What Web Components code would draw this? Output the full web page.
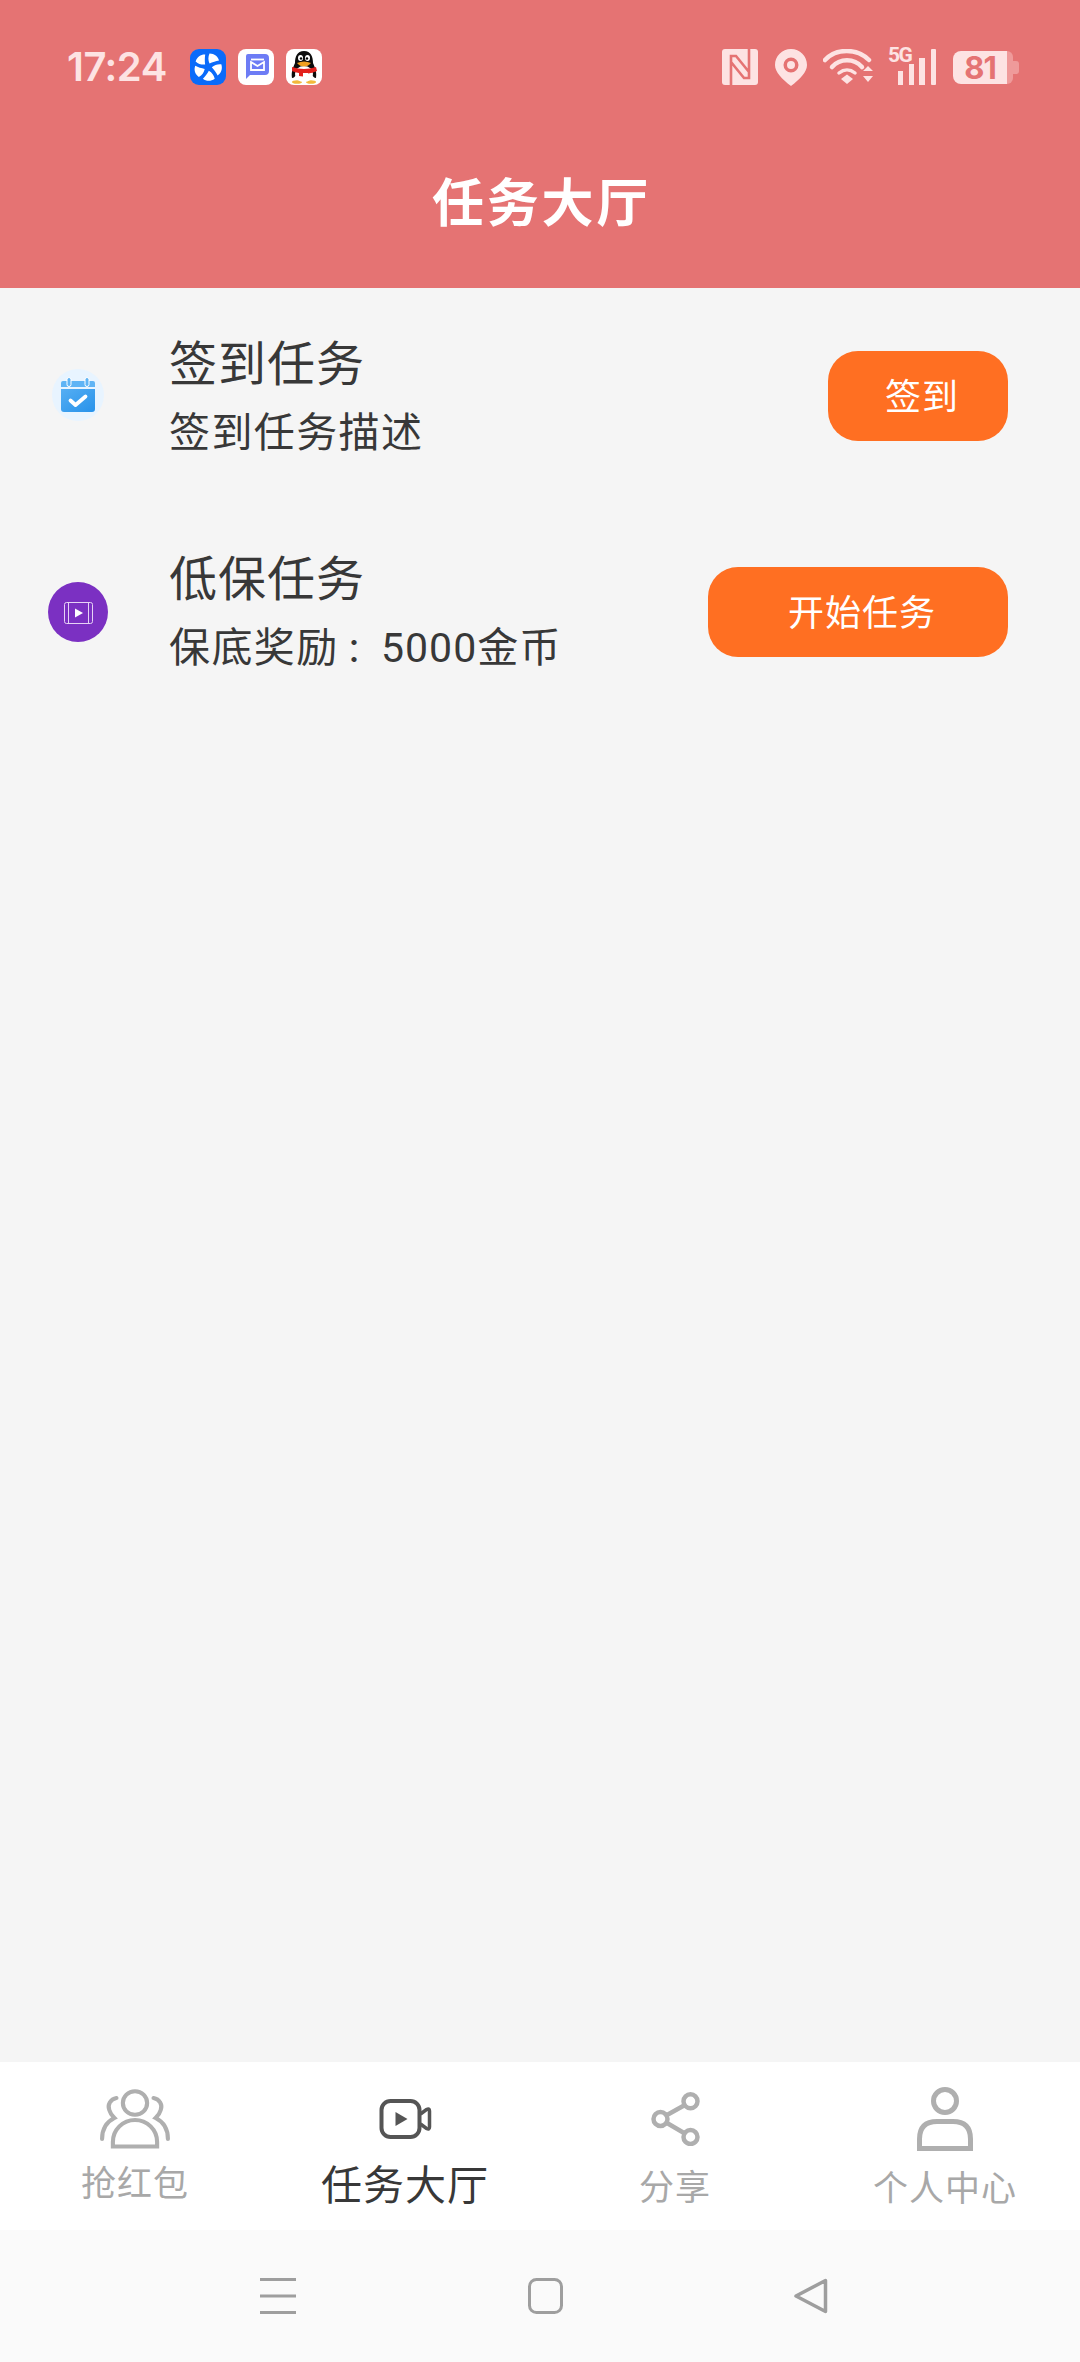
<!DOCTYPE html>
<html><head><meta charset="utf-8">
<style>
html,body{margin:0;padding:0;height:100%}
body{font-family:Roboto,"Noto Sans CJK SC",sans-serif;color:#333;background:#f5f5f5}
</style></head><body>
<app-shell>
  <status-header title-text="任务大厅" time="17:24" battery="81"></status-header>
  <task-list>
    <task-row heading="签到任务" desc="签到任务描述" action="签到" icon="calendar" btn="180"></task-row>
    <task-row heading="低保任务" desc="保底奖励&lt;span class=c&gt;：&lt;/span&gt;&lt;span class=n&gt;5000&lt;/span&gt;金币" action="开始任务" icon="video" btn="300"></task-row>
  </task-list>
  <tab-bar>
    <tab-item label="抢红包" style="--pt:27px;--gap:18px;--fs:35px;--c:#a8a8a8">
      <svg width="72" height="60" viewBox="0 0 70 60" preserveAspectRatio="none" fill="none" stroke="#afafaf" stroke-width="4" stroke-linecap="round">
        <circle cx="35" cy="14" r="11.800"/>
        <path d="M13.500 57.500V53A21.500 22 0 0 1 56.500 53V57.500Z" stroke-linecap="butt"/>
        <path d="M17 9C11 10 8 16 10 21C11 25 13 27 15 29C7 33 3 40 3 50"/>
        <path d="M53 9C59 10 62 16 60 21C59 25 57 27 55 29C63 33 67 40 67 50"/>
      </svg></tab-item>
    <tab-item label="任务大厅" style="--pt:37px;--gap:27px;--fs:41px;--c:#383838">
      <svg width="53" height="40" viewBox="0 0 52 40" fill="none" stroke="#555" stroke-width="4">
        <rect x="2" y="2" width="38" height="36" rx="9"/>
        <path d="M41 15L47 10.500Q50 9 50 12V28Q50 31 47 29.500L41 25" stroke-width="3.500"/>
        <path d="M16 13L28 20L16 27Z" fill="#555" stroke="none"/>
      </svg></tab-item>
    <tab-item label="分享" style="--pt:30px;--gap:25px;--fs:35px;--c:#a8a8a8">
      <svg width="49" height="54" viewBox="0 0 49 54" fill="none" stroke="#afafaf" stroke-width="4.500">
        <circle cx="9.500" cy="27" r="7"/><circle cx="39.500" cy="9.300" r="7"/><circle cx="39.500" cy="45" r="7"/>
        <path d="M16 23L33 13.500M16 31L33 41"/>
      </svg></tab-item>
    <tab-item label="个人中心" style="--pt:25px;--gap:21px;--fs:35px;--c:#a8a8a8">
      <svg width="56" height="64" viewBox="0 0 56 64" fill="none" stroke="#afafaf" stroke-width="5">
        <circle cx="28" cy="14" r="11.500"/>
        <path d="M2.500 61.500V52Q2.500 34.500 20 34.500H36Q53.500 34.500 53.500 52V61.500Z"/>
      </svg></tab-item>
  </tab-bar>
  <nav-bar></nav-bar>
</app-shell>
<script>
function def(name, html){
  customElements.define(name, class extends HTMLElement{
    connectedCallback(){
      if(this.shadowRoot) return;
      const r=this.attachShadow({mode:'open'});
      r.innerHTML = typeof html==='function' ? html(this) : html;
    }
  });
}
const CAL=`<svg width="52" height="52" viewBox="0 0 52 52" style="margin-top:-2px">
<defs><linearGradient id="g" x1="0" y1="0" x2="1" y2="1"><stop offset="0" stop-color="#55aef3"/><stop offset="1" stop-color="#2792ea"/></linearGradient></defs>
<circle cx="26" cy="26" r="26" fill="#e8f4ff"/>
<path d="M9 18V14Q9 12 11 12H41Q43 12 43 14V18Z" fill="#5fb4f5"/>
<path d="M9 20H43V40Q43 43 40 43H12Q9 43 9 40Z" fill="url(#g)"/>
<rect x="15" y="8.500" width="4" height="9" rx="2" fill="#5fb4f5" stroke="#fff" stroke-width="1"/>
<rect x="33" y="8.500" width="4" height="9" rx="2" fill="#5fb4f5" stroke="#fff" stroke-width="1"/>
<path d="M18.500 31.500L23.500 36L33.500 27.500" fill="none" stroke="#fff" stroke-width="3.800" stroke-linecap="round" stroke-linejoin="round"/>
</svg>`;
const VID=`<svg width="60" height="60" viewBox="0 0 60 60">
<circle cx="30" cy="30" r="30" fill="#7b30c2"/>
<rect x="16.500" y="20.500" width="28" height="21" rx="2" fill="none" stroke="#e6d2f5" stroke-width="1"/>
<path d="M20.500 20.500V41.500M40.500 20.500V41.500" stroke="#e6d2f5" stroke-width="1"/>
<path d="M27 26.500L35 31L27 35.500Z" fill="#fff"/>
</svg>`;
const BLADE='M1.500 -3.500C0 -7 0 -10 1.500 -13.500C6.500 -13.500 10 -10.500 11 -6.500C8 -6 4.500 -5 1.500 -3.500Z';
const PIN=`<svg width="36" height="36" viewBox="0 0 36 36"><rect width="36" height="36" rx="9" fill="#0a6bfa"/>
<g transform="translate(18 18)" fill="#fff">${[0,72,144,216,288].map(a=>`<path d="${BLADE}" transform="rotate(${a})"/>`).join('')}</g></svg>`;
const MAIL=`<svg width="36" height="36" viewBox="0 0 36 36"><rect width="36" height="36" rx="8" fill="#fff"/>
<path d="M10 5H27Q31 5 31 9V22Q31 26 27 26H12L8 30V7Q8 5 10 5Z" fill="#6d7cf5"/>
<path d="M13 13L19.500 17L26 13V21H13Z" fill="none" stroke="#fff" stroke-width="1.800"/><path d="M13 10.500H26" stroke="#fff" stroke-width="1.800"/></svg>`;
const QQ=`<svg width="36" height="36" viewBox="0 0 36 36"><rect width="36" height="36" rx="8" fill="#fff"/>
<ellipse cx="11" cy="33" rx="5" ry="1.800" fill="#f2b93b"/><ellipse cx="25" cy="33" rx="5" ry="1.800" fill="#f2b93b"/>
<path d="M18 2C11 2 9 8 9 14C7 19 5 23 6 29C8 29 9 27 10 26C12 31 24 31 26 26C27 27 28 29 30 29C31 23 29 19 27 14C27 8 25 2 18 2Z" fill="#0c0c0c"/>
<ellipse cx="18" cy="25" rx="9" ry="8" fill="#fff"/>
<ellipse cx="14.500" cy="9" rx="2.500" ry="3" fill="#fff"/><ellipse cx="21.500" cy="9" rx="2.500" ry="3" fill="#fff"/>
<circle cx="15" cy="9.500" r="1.200" fill="#000"/><circle cx="21" cy="9.500" r="1.200" fill="#000"/>
<path d="M11 14Q18 11 25 14Q22 17.500 18 17.500Q14 17.500 11 14Z" fill="#f0a020"/>
<path d="M6 18Q18 22 30 18L31 22Q26 24 22 24.500V24H17V27.500L13 27V24Q9 23.500 6 22Z" fill="#e3201c"/></svg>`;
const NFC=`<svg width="36" height="36" viewBox="0 0 36 36"><rect width="36" height="36" rx="3" fill="#fde3e3"/>
<path d="M9 36V7H14L27 23M27 0V29H22L9 13" fill="none" stroke="#e57373" stroke-width="2.600"/></svg>`;
const LOC=`<svg width="32" height="37" viewBox="0 0 32 37"><path fill-rule="evenodd" d="M16 0C25 0 32 7 32 16C32 23 25 30 16 37C7 30 0 23 0 16C0 7 7 0 16 0ZM16 8.500A7.500 7.500 0 1 0 16 23.500A7.500 7.500 0 1 0 16 8.500ZM16 12A4 4 0 1 1 16 20A4 4 0 1 1 16 12Z" fill="#fde3e3"/></svg>`;
const WIFI=`<svg width="51" height="36" viewBox="0 0 51 36" fill="none" stroke="#fde3e3" stroke-width="4.500" stroke-linecap="round">
<path d="M2 11C13 -1 34 -1 46 11"/><path d="M9 18C17 9 31 9 39 18"/><path d="M16 24C21 20 27 20 32 24" stroke-width="3.500"/>
<path d="M18 30L24 25.500L30 30L24 35Z" fill="#fde3e3" stroke="none"/>
<path d="M40 22L45 17L50 22ZM40 27H50L45 33Z" fill="#fde3e3" stroke="none"/></svg>`;
const SIG=`<span class="sig"><span class="g5">5G</span><svg width="48" height="36" viewBox="0 0 48 36" fill="#fde3e3"><rect x="10" y="22" width="5" height="14"/><rect x="21" y="15" width="5" height="21"/><rect x="31" y="9" width="6" height="27"/><rect x="43" y="0" width="5" height="36" rx="1"/></svg></span>`;

def('status-header', h=>`<style>
:host{display:flex;flex-direction:column;height:288px;background:#e57373;flex:none}
.bar{display:flex;align-items:center;justify-content:space-between;padding:49px 61px 0 67px;height:36px}
.l,.r{display:flex;align-items:center}
.time{font:600 40px/36px Inter,Roboto,sans-serif;color:#fde3e3;margin-right:25px;letter-spacing:-.5px;width:98px;white-space:nowrap}
.l svg{margin-right:12px;display:block}.l svg:last-child{margin-right:0}
.r svg{display:block}
.sig{position:relative;display:block;width:48px;height:36px}
.g5{position:absolute;left:0;top:-4px;font:700 21px/21px Roboto,sans-serif;color:#fde3e3;letter-spacing:-1.500px}
.sig svg{position:absolute;left:0;top:0}
.bat{display:flex;width:66px;height:33px}
.bat .fill{width:54px;height:33px;background:#fde3e3;border-radius:8px 0 0 8px;display:flex;align-items:center;justify-content:center;color:#e57373;font:700 31px/33px Inter,Roboto,sans-serif;letter-spacing:-1px}
.bat .rest{width:6px;height:33px;background:#ef9a9a;border-radius:0 6px 6px 0}
.bat .nub{width:6px;height:13px;background:#ef9a9a;align-self:center;border-radius:0 3px 3px 0}
h1{margin:0;flex:1;display:flex;align-items:center;justify-content:center;font:700 52px/1 Roboto,"Noto Sans CJK SC",sans-serif;color:#fff;letter-spacing:2.700px;padding:36px 0 0 3px}
</style>
<div class="bar"><div class="l"><span class="time">${h.getAttribute('time')}</span>${PIN}${MAIL}${QQ}</div>
<div class="r">${NFC}<span style="width:17px"></span>${LOC}<span style="width:16px"></span>${WIFI}<span style="width:14px"></span>${SIG}<span style="width:17px"></span>
<div class="bat"><div class="fill">${h.getAttribute('battery')}</div><div class="rest"></div><div class="nub"></div></div></div></div>
<h1>${h.getAttribute('title-text')}</h1>`);

def('task-list',`<style>:host{display:block;flex:1;background:#f5f5f5}</style><slot></slot>`);
def('task-row', h=>`<style>
:host{display:flex;align-items:center;height:216px;padding-right:72px;box-sizing:border-box}
.ic{width:156px;flex:none;display:flex;justify-content:center}
.ic svg{display:block}
.tx{flex:1;margin-left:13px;min-width:0;display:flex;flex-direction:column;gap:12px;padding-top:1px}
.t{font-size:48px;line-height:60px;letter-spacing:1px;color:#383838}
.d{font-size:41px;line-height:52px;letter-spacing:1.400px;color:#383838}
.n{letter-spacing:1px}
.c{font-size:34px;margin-left:7px}
button{all:unset;box-sizing:border-box;height:90px;width:${h.getAttribute('btn')}px;padding:0 0 5px 8px;text-align:center;background:#ff6f22;border-radius:30px;color:#fff;font-size:36px;letter-spacing:1px;font-family:inherit}
</style>
<div class="ic">${h.getAttribute('icon')==='calendar'?CAL:VID}</div>
<div class="tx"><div class="t">${h.getAttribute('heading')}</div><div class="d">${h.getAttribute('desc')}</div></div>
<button>${h.getAttribute('action')}</button>`);

def('tab-bar',`<style>:host{display:grid;grid-template-columns:repeat(4,1fr);height:168px;background:#fff;flex:none}</style><slot></slot>`);
def('tab-item', h=>`<style>
:host{display:flex;flex-direction:column;align-items:center;padding-top:var(--pt);gap:var(--gap);box-sizing:border-box;min-width:0}
::slotted(svg){display:block}
.lb{font-size:var(--fs);line-height:1;letter-spacing:1px;color:var(--c);white-space:nowrap}
</style><slot></slot><div class="lb">${h.getAttribute('label')}</div>`);
def('nav-bar',`<style>:host{display:flex;align-items:flex-start;height:132px;background:#fafafa;flex:none;padding:48px 0 0 260px;box-sizing:border-box}
svg{display:block}</style>
<svg width="36" height="36" viewBox="0 0 36 36" stroke="#9e9e9e" stroke-width="3"><path d="M0 1.500H36M0 18H36M0 34.500H36"/></svg>
<svg width="35" height="36" viewBox="0 0 35 36" fill="none" stroke="#9e9e9e" stroke-width="3" style="margin-left:232px"><rect x="1.500" y="1.500" width="32" height="33" rx="7"/></svg>
<svg width="34" height="36" viewBox="0 0 34 36" fill="none" stroke="#9e9e9e" stroke-width="3.500" stroke-linejoin="round" style="margin-left:231px"><path d="M2 18L31.500 2.500V33.500Z"/></svg>`);
def('app-shell',`<style>:host{display:flex;flex-direction:column;height:2362px;width:1080px;overflow:hidden}</style><slot></slot>`);
</script>
</body></html>
